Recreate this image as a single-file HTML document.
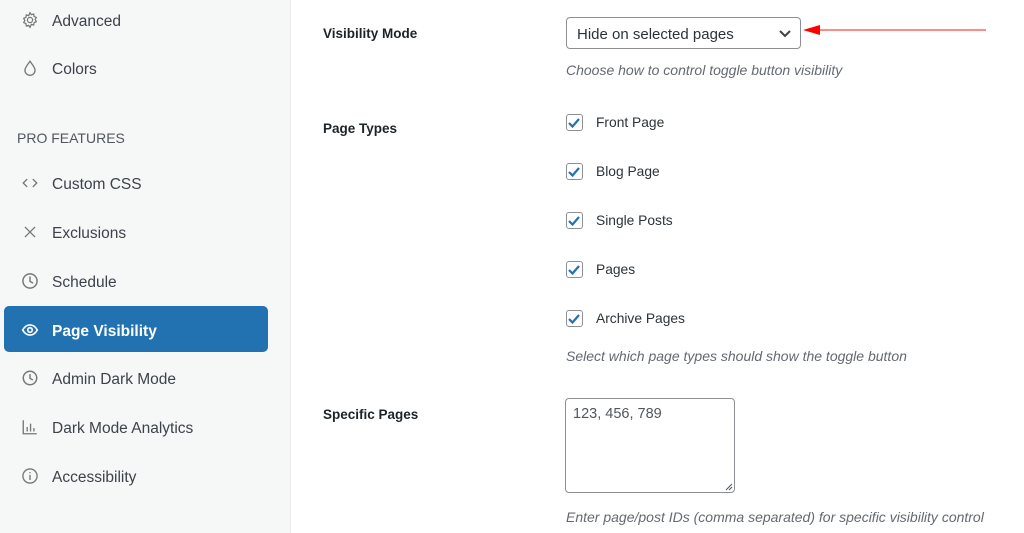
<!DOCTYPE html><html><head><style>
body{margin:0;width:1024px;height:533px;overflow:hidden;background:#fff;font-family:"Liberation Sans",sans-serif;position:relative}
.sb{position:absolute;left:0;top:0;width:290px;height:533px;background:#f6f7f7;border-right:1px solid #e8eaeb}
.it{position:absolute;left:52px;font-size:15.5px;color:#3c434a;line-height:20px;transform:translateY(-8px)}
.ic{position:absolute;left:21px;width:18px;height:18px;transform:translateY(-9px)}
.act{position:absolute;left:4px;top:306px;width:264px;height:46px;background:#2271b1;border-radius:5px}
.lb{position:absolute;left:323px;font-size:13.5px;font-weight:bold;color:#1d2327;transform:translateY(-7px)}
.hint{position:absolute;left:566px;font-size:14px;font-style:italic;color:#646970;transform:translateY(-8px)}
.cb{position:absolute;left:566px;width:15px;height:15px;border:1px solid #8c8f94;border-radius:3px;transform:translateY(-8px);background:#fff}
.cl{position:absolute;left:596px;font-size:13.8px;color:#2c3338;transform:translateY(-7px)}
</style></head><body>
<div class="sb"></div>
<div class="act"></div>
<svg class="ic" style="top:20px" viewBox="0 0 16 16" fill="none" stroke="#777" stroke-width="1.1"><circle cx="8" cy="8" r="2.3"/><path d="M8 1.5l1.2 1.8 2.1-.6.3 2.1 2 .9-1 1.9 1 1.9-2 .9-.3 2.1-2.1-.6L8 14.5l-1.2-1.8-2.1.6-.3-2.1-2-.9 1-1.9-1-1.9 2-.9.3-2.1 2.1.6z"/></svg>
<div class="it" style="top:20px">Advanced</div>
<svg class="ic" style="top:68px" viewBox="0 0 16 16" fill="none" stroke="#777" stroke-width="1.2"><path d="M8 2C6 5 3.5 7.5 3.5 10a4.5 4.5 0 0 0 9 0C12.5 7.5 10 5 8 2z"/></svg>
<div class="it" style="top:68px">Colors</div>
<div class="it" style="top:136px;left:17px;font-size:14px;color:#50575e">PRO FEATURES</div>
<svg class="ic" style="top:183px" viewBox="0 0 16 16" fill="none" stroke="#777" stroke-width="1.2"><path d="M5.5 4.5L2 8l3.5 3.5M10.5 4.5L14 8l-3.5 3.5"/></svg>
<div class="it" style="top:183px">Custom CSS</div>
<svg class="ic" style="top:232px" viewBox="0 0 16 16" fill="none" stroke="#777" stroke-width="1.2"><path d="M3.5 3.5l9 9M12.5 3.5l-9 9"/></svg>
<div class="it" style="top:232px">Exclusions</div>
<svg class="ic" style="top:281px" viewBox="0 0 16 16" fill="none" stroke="#777" stroke-width="1.3"><circle cx="8" cy="8" r="6.3"/><path d="M8 4v4.3l2.7 1.6"/></svg>
<div class="it" style="top:281px">Schedule</div>
<svg class="ic" style="top:330px" viewBox="0 0 16 16" fill="none" stroke="#fff" stroke-width="1.5"><path d="M1.5 8C3.3 4.8 5.5 3.5 8 3.5s4.7 1.3 6.5 4.5c-1.8 3.2-4 4.5-6.5 4.5S3.3 11.2 1.5 8z"/><circle cx="8" cy="8" r="2"/></svg>
<div class="it" style="top:330px;color:#fff;font-weight:bold">Page Visibility</div>
<svg class="ic" style="top:378px" viewBox="0 0 16 16" fill="none" stroke="#777" stroke-width="1.3"><circle cx="8" cy="8" r="6"/><path d="M8 4.5v3.8l2.5 1.5"/></svg>
<div class="it" style="top:378px">Admin Dark Mode</div>
<svg class="ic" style="top:427px" viewBox="0 0 16 16" fill="none" stroke="#777" stroke-width="1.2"><path d="M2 2v12h12M5.5 12V8M8.5 12V5M11.5 12V9"/></svg>
<div class="it" style="top:427px">Dark Mode Analytics</div>
<svg class="ic" style="top:476px" viewBox="0 0 16 16" fill="none" stroke="#777" stroke-width="1.2"><circle cx="8" cy="8" r="6.3"/><path d="M8 7v4.5M8 4.6v.9"/></svg>
<div class="it" style="top:476px">Accessibility</div>

<div class="lb" style="top:33px">Visibility Mode</div>
<div style="position:absolute;left:566px;top:17px;width:235px;height:32px;border:1px solid #8c8f94;border-radius:4px;box-sizing:border-box"></div>
<div style="position:absolute;left:577px;top:26px;font-size:15px;color:#2c3338">Hide on selected pages</div>
<svg style="position:absolute;left:778px;top:29px" width="14" height="10" viewBox="0 0 14 10" fill="none" stroke="#3c434a" stroke-width="2"><path d="M2 2l5 5 5-5"/></svg>
<svg style="position:absolute;left:800px;top:22px" width="190" height="16"><line x1="15" y1="8" x2="186" y2="8" stroke="#f44" stroke-width="1.3"/><path d="M3 8L20 3v10z" fill="#f00"/></svg>
<div class="hint" style="top:70px">Choose how to control toggle button visibility</div>

<div class="lb" style="top:128px">Page Types</div>
<div class="cb" style="top:122px"></div><div class="cl" style="top:122px">Front Page</div>
<div class="cb" style="top:171px"></div><div class="cl" style="top:171px">Blog Page</div>
<div class="cb" style="top:220px"></div><div class="cl" style="top:220px">Single Posts</div>
<div class="cb" style="top:269px"></div><div class="cl" style="top:269px">Pages</div>
<div class="cb" style="top:318px"></div><div class="cl" style="top:318px">Archive Pages</div>
<svg style="position:absolute;left:0;top:0" width="1024" height="533" fill="none" stroke="#2271b1" stroke-width="2.2">
<path d="M569 123l3.5 3.5 6.5-7.5"/><path d="M569 172l3.5 3.5 6.5-7.5"/><path d="M569 221l3.5 3.5 6.5-7.5"/><path d="M569 270l3.5 3.5 6.5-7.5"/><path d="M569 319l3.5 3.5 6.5-7.5"/></svg>
<div class="hint" style="top:356px">Select which page types should show the toggle button</div>

<div class="lb" style="top:414px">Specific Pages</div>
<div style="position:absolute;left:565px;top:398px;width:170px;height:95px;border:1px solid #8c8f94;border-radius:4px;box-sizing:border-box"></div>
<div style="position:absolute;left:573px;top:406px;font-size:14.5px;color:#50575e">123, 456, 789</div>
<svg style="position:absolute;left:725px;top:483px" width="8" height="8" stroke="#555" stroke-width="1"><path d="M1 7L7 1M4 7L7 4"/></svg>
<div class="hint" style="top:517px">Enter page/post IDs (comma separated) for specific visibility control</div>
</body></html>
